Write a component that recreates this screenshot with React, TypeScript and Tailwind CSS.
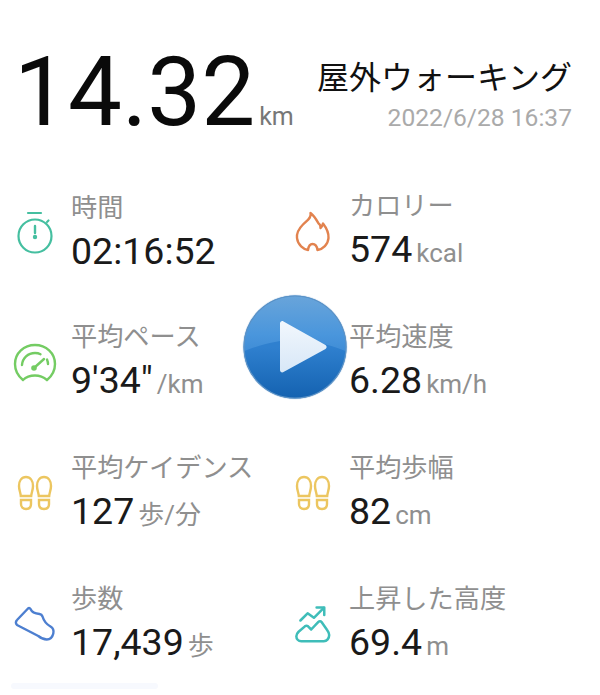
import React from "react";

const StopwatchIcon = () => (
  <svg viewBox="0 0 36 44" className="h-11 w-9" fill="none" stroke="#45bfa0" strokeWidth="2.2" strokeLinecap="round">
    <path d="M11 3h13" />
    <circle cx="18" cy="26" r="16.5" />
    <path d="M30 12l1.5-1.5" />
    <path d="M18 16v7" strokeWidth="2.4" />
    <circle cx="18" cy="27" r="2.2" fill="#45bfa0" stroke="none" />
  </svg>
);

const FlameIcon = () => (
  <svg viewBox="0 0 36 44" className="h-11 w-9" fill="none" stroke="#e2834f" strokeWidth="2.4" strokeLinejoin="round" strokeLinecap="round">
    <path d="M15.5 3c1.5 4.500 -3 7 -7.500 11.500C3.500 19 1.500 23 2 28c.8 7 6.500 11.500 11 12 .5 -3.500 2 -6 4.500 -6s4.500 2.500 5 6c5.500 -.8 10.500 -5.500 11 -12 .3 -5 -2 -10 -5.500 -14.500 -.5 2 -1.300 3.500 -2.500 4.500 .3 -3 -1 -4 -2 -4.500C21.500 10 19.500 6 15.500 3z" />
  </svg>
);

const GaugeIcon = () => (
  <svg viewBox="0 0 44 44" className="h-11 w-11 shrink-0 -mx-1" fill="none" stroke="#74cc63" strokeWidth="2.4" strokeLinecap="round">
    <path d="M10 39C5 35 2 29 2 23 2 12 11 4 22 4s20 8 20 19c0 6 -3 12 -8 16 -3.500 -3 -7.500 -4.500 -12 -4.500S13 36 10 39z" />
    <path d="M9 24c.5 -7 6 -12 13 -12 2 0 4 .4 5.500 1.200" />
    <path d="M35 23c0 -1.500 -.4 -3 -1 -4.500" />
    <path d="M21 27l10 -9" />
    <circle cx="21" cy="27" r="2.800" fill="#74cc63" stroke="none" />
  </svg>
);

const StepsIcon = () => (
  <svg viewBox="0 0 36 44" className="h-11 w-9" fill="none" stroke="#ecc660" strokeWidth="2.4" strokeLinecap="round">
    <path d="M2 14c0 -5 2.500 -9 7 -9s7 4 7 9c0 4 -1.500 6.500 -1.800 10H3.800C3.500 20.500 2 18 2 14z" />
    <path d="M4 28h10v4c0 3 -2 5 -5 5s-5 -2 -5 -5z" />
    <path d="M20 14c0 -5 2.500 -9 7 -9s7 4 7 9c0 4 -1.500 6.500 -1.800 10H21.800C21.500 20.500 20 18 20 14z" />
    <path d="M22 28h10v4c0 3 -2 5 -5 5s-5 -2 -5 -5z" />
  </svg>
);

const ShoeIcon = () => (
  <svg viewBox="0 0 44 40" className="h-10 w-11 shrink-0 -mx-1" fill="none" stroke="#4d7fd0" strokeWidth="2.400" strokeLinejoin="round">
    <path d="M4 15L15 3.500c1 -.8 2 -.5 2.500 .5 1.500 3.500 4 4.500 9 5 1.500 .2 2.500 1 3 2.500 1.500 5 3.500 7.500 8 10 3 1.800 3.500 4 2.800 7 -.7 3 -3 6 -6.500 6 -3.500 0 -6 -1.500 -8.500 -3.500L4 20c-1.500 -1.500 -1.500 -3.500 0 -5z" />
  </svg>
);

const ClimbIcon = () => (
  <svg viewBox="0 0 40 44" className="h-10 w-9 shrink-0" fill="none" stroke="#3fbdb9" strokeWidth="2.800" strokeLinecap="round" strokeLinejoin="round">
    <path d="M6 17l8 -8 7 5 11 -11" />
    <path d="M24 2.500h8.500V11" />
    <path d="M7 40c-3.500 0 -5.500 -2.500 -5.500 -5.500 0 -2 1 -3.500 2.500 -5l7 -6c1 -.8 2.500 -.8 3.500 0l3.500 3.500 8 -8.500c1 -1 2.500 -1 3.500 .2l6 8.500c1.500 2 2.500 4 2.500 6 0 3.500 -2.500 6.800 -6 6.800z" />
  </svg>
);

const PlayButton = () => (
  <svg viewBox="0 0 106 106" className="absolute left-[242px] top-[294px] h-[106px] w-[106px]">
    <defs>
      <linearGradient id="base" x1="0" y1="0" x2="0" y2="1">
        <stop offset="0" stopColor="#2f7fcb" />
        <stop offset="0.5" stopColor="#2f80cf" />
        <stop offset="1" stopColor="#1462b0" />
      </linearGradient>
      <linearGradient id="gloss" x1="0" y1="0" x2="0" y2="1">
        <stop offset="0" stopColor="#6aa5da" />
        <stop offset="0.7" stopColor="#4a96dc" />
        <stop offset="1" stopColor="#3f8cd6" />
      </linearGradient>
      <linearGradient id="tri" x1="0" y1="0" x2="0" y2="1">
        <stop offset="0" stopColor="#f2f7fd" />
        <stop offset="1" stopColor="#d7e7f7" />
      </linearGradient>
      <clipPath id="disc">
        <circle cx="53" cy="53" r="51" />
      </clipPath>
    </defs>
    <circle cx="53" cy="53" r="52.500" fill="#e3ecf5" />
    <circle cx="53" cy="53" r="51.500" fill="url(#base)" />
    <path d="M0 58C20 50 36 46 53 46s33 4 53 12V0H0z" fill="url(#gloss)" clipPath="url(#disc)" />
    <circle cx="53" cy="53" r="51" fill="none" stroke="#5d93c6" strokeWidth="1.200" />
    <path d="M38 29.500c0 -2 2 -3 3.500 -2l42 23.500c1.500 1 1.500 3 0 4l-42 23c-1.500 1 -3.500 0 -3.500 -2z" fill="url(#tri)" />
  </svg>
);

type Stat = { icon: React.ReactNode; label: string; value: string; unit: string };

const stats: Stat[] = [
  { icon: <StopwatchIcon />, label: "時間", value: "02:16:52", unit: "" },
  { icon: <FlameIcon />, label: "カロリー", value: "574", unit: "kcal" },
  { icon: <GaugeIcon />, label: "平均ペース", value: "9'34\"", unit: "/km" },
  { icon: null, label: "平均速度", value: "6.28", unit: "km/h" },
  { icon: <StepsIcon />, label: "平均ケイデンス", value: "127", unit: "歩/分" },
  { icon: <StepsIcon />, label: "平均歩幅", value: "82", unit: "cm" },
  { icon: <ShoeIcon />, label: "歩数", value: "17,439", unit: "歩" },
  { icon: <ClimbIcon />, label: "上昇した高度", value: "69.4", unit: "m" },
];

export default function App() {
  return (
    <div className="relative h-[695px] w-[600px] overflow-hidden bg-white font-['Roboto','Noto_Sans_CJK_JP',sans-serif]">
      <div className="flex h-[150px] items-start justify-between pl-[14px] pr-[28px]">
        <div className="flex items-baseline gap-[4px] pt-[36px]">
          <span className="text-[96px] leading-[112px] text-[#0a0a0a]">14.32</span>
          <span className="text-[25px] text-[#777777]">km</span>
        </div>
        <div className="flex flex-col items-end pt-[57px]">
          <span className="text-[32px] leading-[42px] text-[#111111]">屋外ウォーキング</span>
          <span className="text-[24.6px] leading-[38px] text-[#aaaaaa]">2022/6/28 16:37</span>
        </div>
      </div>

      <div className="mt-[39px] grid grid-cols-[278px_1fr] gap-y-[45px] pl-[17px]">
        {stats.map((s) => (
          <div key={s.label} className="flex h-[86px] items-center gap-[18px]">
            <div className="flex w-9 justify-center">{s.icon}</div>
            <div className="flex flex-col">
              <span className="text-[26.2px] leading-[38px] text-[#8f8f8f]">{s.label}</span>
              <span className="flex items-baseline gap-[4px] leading-[48px]">
                <span className="text-[37.5px] text-[#1a1a1a]">{s.value}</span>
                {s.unit && <span className="text-[26px] text-[#8f8f8f]">{s.unit}</span>}
              </span>
            </div>
          </div>
        ))}
      </div>

      <div className="ml-[11px] mt-[15px] h-[6px] w-[147px] rounded-sm bg-[#f7f9fe]" />

      <PlayButton />
    </div>
  );
}
